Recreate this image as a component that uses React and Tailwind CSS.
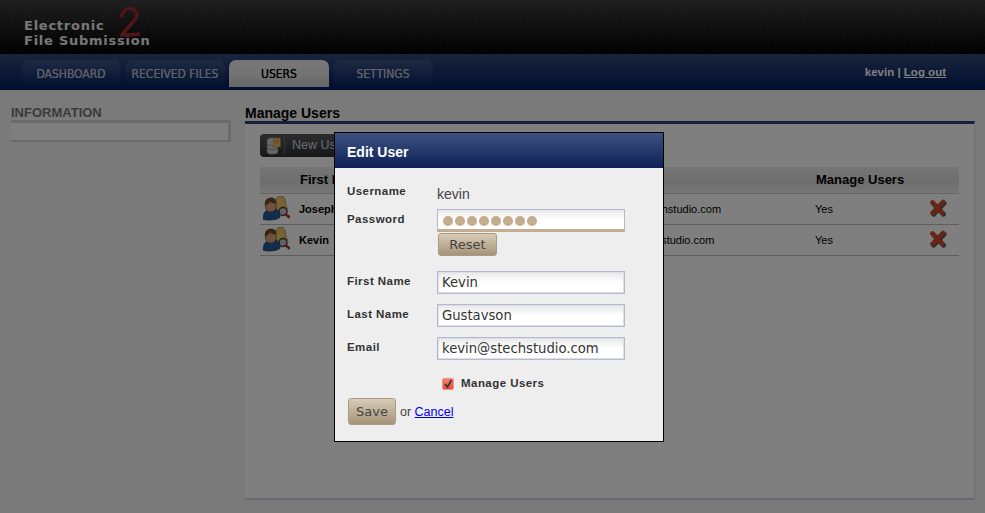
const sans = "font-['Liberation_Sans',Arial,sans-serif]"

function TwoUsers() {
  return (
    <svg width="27" height="25" viewBox="0 0 27 25">
      <path d="M12.500 6c0-3.500 2.500-6 5-6s4.500 2 4.800 5c.2 3 1.200 6 2.200 8l-3 3h-7l-2-5z" fill="#ecc868" stroke="#8a7028" strokeWidth=".7" />
      <path d="M0 23c0-5 2-8 5-9l7-1c4 1 5 4 5 8-2 3-13 4-17 2z" fill="#205c9c" stroke="#103460" strokeWidth=".7" />
      <path d="M2.500 8c0-3 2.500-5 5-5s5.500 2 5.500 5v3c0 3-2.500 5-5.500 5s-5-2-5-5z" fill="#dca47c" stroke="#5a3a20" strokeWidth=".6" />
      <path d="M2 10C.8 5 4 1.500 8 1.500c3.500 0 5.500 2.500 5.500 6-2.500 0-5-.5-6.500-2-.5 2-3 2.500-5 4.500z" fill="#704a28" />
      <circle cx="20" cy="15.500" r="4" fill="#c0c8d0" stroke="#4a3030" strokeWidth="1.300" />
      <path d="M23 18.500l3 2.500" stroke="#b03028" strokeWidth="2.800" strokeLinecap="round" />
    </svg>
  )
}

function DeleteX() {
  return (
    <svg width="18" height="18" viewBox="0 0 18 18">
      <path d="M4 4l10 10.500M14.500 3.500L4 14.500" stroke="#5a5a5a" strokeWidth="4.800" strokeLinecap="round" transform="translate(.6 .8)" />
      <path d="M3.500 3.500l10 10.500M14 3L3.500 14" stroke="#cc4a2c" strokeWidth="4.600" strokeLinecap="round" />
    </svg>
  )
}

function DbIcon() {
  return (
    <svg width="15" height="18" viewBox="0 0 15 18">
      <path d="M1 3c0-3 11-3 11 0v12c0 3-11 3-11 0z" fill="#c8ccd2" stroke="#808080" strokeWidth=".6" />
      <path d="M1 7c2 2 9 2 11 0M1 11c2 2 9 2 11 0" fill="none" stroke="#8a8a8a" strokeWidth=".8" />
      <rect x="7.500" y="1" width="7" height="9" fill="#e0c070" stroke="#a08030" strokeWidth=".5" />
      <circle cx="11" cy="4.500" r="2" fill="#f09030" />
    </svg>
  )
}

const labelText = "text-[11.5px] font-bold tracking-[0.45px] text-[#333]"

function Field({ label, value, className = "" }) {
  return (
    <div className={`flex ${className}`}>
      <label className={`w-[90px] pt-[2px] ${labelText}`}>{label}</label>
      <input
        readOnly
        value={value}
        className="h-[23px] w-[188px] border border-[#b4b8d0] bg-gradient-to-b from-[#e8e8e8] to-white to-50% px-[4px] font-['DejaVu_Sans',sans-serif] text-[13.2px] text-[#333] shadow-[inset_0_0_0_1px_#dcdee8] outline-none"
      />
    </div>
  )
}

function TanButton({ children, className = "" }) {
  return (
    <button className={`rounded-[3px] border border-[#a89a84] bg-gradient-to-b from-[#d8ccb8] to-[#a69479] font-['DejaVu_Sans',sans-serif] text-[13px] text-[#444] ${className}`}>
      {children}
    </button>
  )
}

const users = [
  { first: "Joseph", email: "joseph@stechstudio.com" },
  { first: "Kevin", email: "kevin@stechstudio.com" },
]

const cols = "grid grid-cols-[39px_299px_217px_113px_31px] items-center"

export default function App() {
  return (
    <div className={`relative h-[513px] w-[985px] overflow-hidden bg-[#f5f5f5] ${sans}`}>
      <header className="h-[54px] bg-[repeating-linear-gradient(135deg,rgba(255,255,255,0.04)_0px,rgba(255,255,255,0.04)_1px,transparent_1px,transparent_4px),linear-gradient(to_bottom,#3c3c3c,#000)] pt-[18px] pl-6">
        <div className="relative w-fit font-['DejaVu_Sans',sans-serif] text-[13px] leading-[15px] font-bold tracking-[0.75px] text-[#eee]">
          <div>Electronic</div>
          <div>File Submission</div>
          <svg className="absolute top-[-12px] left-[96px]" width="20" height="32" viewBox="0 0 20 32">
            <path d="M1.500 10C3 4 8 1.500 11 2.500c5 1.500 7 5.500 5 9.500-3 5-9 10-14 17 5 0 11 0 17-1" fill="none" stroke="#a02a30" strokeWidth="3.600" strokeLinecap="round" />
          </svg>
        </div>
      </header>

      <nav className="flex h-[36px] justify-between bg-gradient-to-b from-[#34497a] to-[#021a5c] pl-[21px] pr-[39px]">
        <div className="flex items-end gap-1 pb-[3px]">
          {["DASHBOARD", "RECEIVED FILES", "USERS", "SETTINGS"].map((tab) => (
            <a
              key={tab}
              className={`flex h-[27px] w-[100px] items-center justify-center rounded-t-[7px] font-['DejaVu_Sans_Condensed',sans-serif] text-[12px] [text-shadow:0_0_0.6px_currentColor] ${
                tab === "USERS" ? "bg-gradient-to-b from-[#f0f0f0] via-[#e8e8e8] to-[#cfcfcf] text-black" : "bg-gradient-to-b from-[#3e5488] to-[#06205f] text-[#b8c0d0]"
              }`}
            >
              {tab}
            </a>
          ))}
        </div>
        <div className="pt-[10px] text-[11.5px] font-bold text-white">
          kevin | <a className="underline">Log out</a>
        </div>
      </nav>

      <main className="flex pl-[11px] pr-[10px]">
        <aside className="w-[220px] pt-[15px]">
          <h3 className="text-[13px] leading-[15px] font-bold text-[#777]">INFORMATION</h3>
          <div className="h-[22px] border-t-[3px] border-r-[3px] border-b-2 border-[#d4d4d4] bg-[#fcfcfc]" />
        </aside>
        <section className="ml-[14px] flex-1 pt-[15px]">
          <h2 className="h-[16px] text-[14px] leading-[16px] font-bold text-black">Manage Users</h2>
          <div className="h-[379px] border-t-[3px] border-r border-b-2 border-t-[#2c3f78] border-r-[#ddd] border-b-[#d0d0e0] bg-white pt-[10px] pl-[15px]">
            <button className="flex h-[23px] w-[110px] items-center rounded-[4px] bg-gradient-to-b from-[#5a5a5a] to-[#303030] pl-[6px] text-[12.5px] text-[#d0d8e8]">
              <DbIcon />
              <span className="ml-[3px] border-l border-[#666] pl-[7px]">New Users</span>
            </button>
            <div className="mt-[10px] w-[699px]">
              <div className={`${cols} h-[27px] border-b border-[#ccc] bg-gradient-to-b from-[#ececec] via-[#dcdcdc] via-60% to-[#f0f0f0] text-[13px] font-bold text-black`}>
                <span />
                <span className="pl-[1px]">First Name</span>
                <span>Email</span>
                <span className="pl-[1px]">Manage Users</span>
                <span />
              </div>
              {users.map((user) => (
                <div key={user.first} className={`${cols} h-[31px] border-b border-[#bbb] text-[11px] text-black`}>
                  <span className="pl-[3px] pb-[2px]"><TwoUsers /></span>
                  <span className="font-bold">{user.first}</span>
                  <span>{user.email}</span>
                  <span>Yes</span>
                  <span className="pl-[1px] pb-[2px]"><DeleteX /></span>
                </div>
              ))}
            </div>
          </div>
        </section>
      </main>

      <div className="absolute inset-0 bg-black/50" />

      <div className="absolute top-[132px] left-[334px] h-[310px] w-[330px] border border-black bg-[#eeeeee]">
        <div className="flex h-[35px] items-center bg-gradient-to-b from-[#3e5280] to-[#0e2058] pt-[4px] pl-[12px] text-[14px] font-bold text-white">Edit User</div>
        <div className="pt-[11px] pl-[12px]">
          <div className="flex h-[30px]">
            <label className={`w-[90px] pt-[4px] ${labelText}`}>Username</label>
            <span className="pt-[5px] text-[14px] text-[#444]">kevin</span>
          </div>
          <div className="flex">
            <label className={`w-[90px] pt-[2px] ${labelText}`}>Password</label>
            <div>
              <div className="flex h-[23px] w-[188px] items-center gap-[2px] border-x border-t border-b-[3px] border-x-[#b4b8d0] border-t-[#b4b8d0] border-b-[#c4ad8f] bg-gradient-to-b from-[#e8e8e8] to-white to-50% pt-[2px] pl-[5px]">
                {[0, 1, 2, 3, 4, 5, 6, 7].map((i) => (
                  <span key={i} className="h-[10px] w-[10px] rounded-full bg-[#c4ad8f]" />
                ))}
              </div>
              <TanButton className="mt-[1px] ml-[1px] block h-[23px] w-[59px]">Reset</TanButton>
            </div>
          </div>
          <Field label="First Name" value="Kevin" className="mt-[15px]" />
          <Field label="Last Name" value="Gustavson" className="mt-[10px]" />
          <Field label="Email" value="kevin@stechstudio.com" className="mt-[10px]" />
          <div className="mt-[15px] ml-[95px] flex items-center gap-[7px]">
            <span className="flex h-[12px] w-[12px] items-center justify-center rounded-[2px] border border-[#f09080] bg-gradient-to-b from-[#f08070] to-[#e84a38]">
              <svg width="10" height="10" viewBox="0 0 10 10"><path d="M2 5l2.500 3L8.500 1" fill="none" stroke="#333" strokeWidth="1.600" /></svg>
            </span>
            <span className={labelText}>Manage Users</span>
          </div>
          <div className="mt-[6px] ml-[1px] flex items-center gap-1 text-[12.5px] text-[#444]">
            <TanButton className="h-[27px] w-[48px]">Save</TanButton>
            <span className="pt-[1px]">or <a className="text-[#0000ee] underline">Cancel</a></span>
          </div>
        </div>
      </div>
    </div>
  )
}
